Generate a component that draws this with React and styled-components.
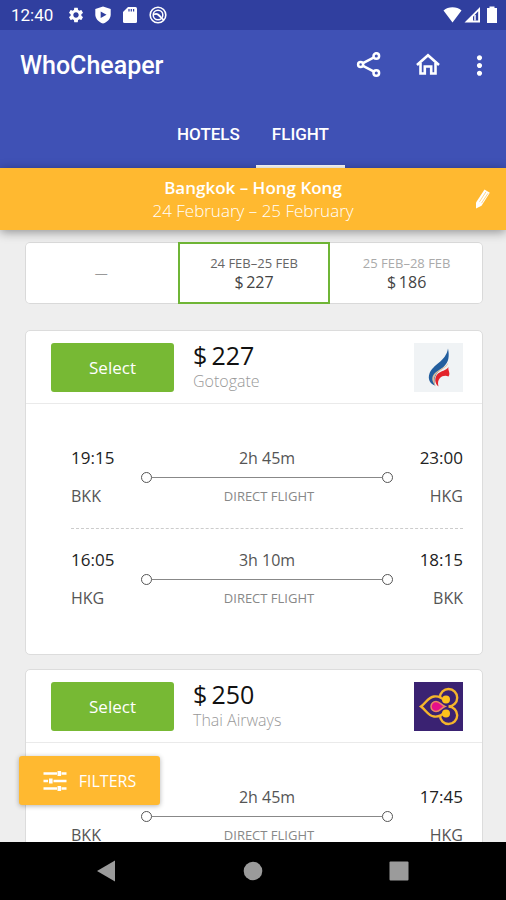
import React from "react";
import styled, { createGlobalStyle } from "styled-components";
import { MdMoreVert, MdSettings } from "react-icons/md";

const days = [
  { id: "none" },
  { id: "current", label: "24 FEB–25 FEB", price: 227, active: true },
  { id: "next", label: "25 FEB–28 FEB", price: 186 },
];

const offers = [
  {
    price: 227,
    agency: "Gotogate",
    Logo: FlameLogo,
    legs: [
      { from: "BKK", to: "HKG", start: "19:15", end: "23:00", length: "2h 45m" },
      { from: "HKG", to: "BKK", start: "16:05", end: "18:15", length: "3h 10m" },
    ],
  },
  {
    price: 250,
    agency: "Thai Airways",
    Logo: OrchidLogo,
    legs: [
      { from: "BKK", to: "HKG", start: "14:00", end: "17:45", length: "2h 45m" },
    ],
  },
];

// thin space between the sign and the amount
const formatPrice = (amount) => `$\u2009${amount}`;

function App() {
  return (
    <Screen>
      <GlobalStyle />
      <StatusBar />
      <Header />
      <TripBar>
        <div>
          <Route>Bangkok – Hong Kong</Route>
          <Dates>24 February – 25 February</Dates>
        </div>
        <EditButton aria-label="Edit search">
          <PencilIcon />
        </EditButton>
      </TripBar>
      <Results>
        <DayStrip>
          {days.map((day) => (
            <Day key={day.id} $active={day.active}>
              {day.label && <DayLabel>{day.label}</DayLabel>}
              <DayPrice $empty={!day.price}>
                {day.price ? formatPrice(day.price) : "—"}
              </DayPrice>
            </Day>
          ))}
        </DayStrip>
        {offers.map((offer) => (
          <Offer key={offer.agency} {...offer} />
        ))}
      </Results>
      <BottomArea>
        <FiltersButton>
          <FiltersIcon />
          FILTERS
        </FiltersButton>
        <SystemNav>
          <NavButton aria-label="Back">
            <svg width="20" height="22" viewBox="0 0 20 22">
              <path d="M0 11 18 .5v21z" fill="#9b9b9b" />
            </svg>
          </NavButton>
          <NavButton aria-label="Home">
            <svg width="20" height="20" viewBox="0 0 20 20">
              <circle cx="10" cy="10" r="9.3" fill="#9b9b9b" />
            </svg>
          </NavButton>
          <NavButton aria-label="Recent apps">
            <svg width="20" height="20" viewBox="0 0 20 20">
              <rect x=".5" y=".5" width="19" height="19" rx="1" fill="#9b9b9b" />
            </svg>
          </NavButton>
        </SystemNav>
      </BottomArea>
    </Screen>
  );
}

export default App;

function StatusBar() {
  return (
    <Status>
      <Clock>12:40</Clock>
      <StatusIcons $gap={9}>
        <MdSettings size={18} />
        <svg width="18" height="18" viewBox="0 0 18 18">
          <path d="M9 .6 16.700 3v5.500c0 4-3 7.400-7.700 9.100-4.700-1.700-7.700-5.100-7.700-9.100V3z" fill="#fff" />
          <path d="M6.700 5.500v6.600L12.500 8.800z" fill="#303f9f" />
        </svg>
        <svg width="18" height="18" viewBox="0 0 18 18">
          <path d="M7 1h7.500A1.500 1.500 0 0 1 16 2.500v13a1.500 1.500 0 0 1-1.500 1.500h-11A1.500 1.500 0 0 1 2 15.500V6z" fill="#fff" />
          <path d="M8 3v2.500M10.300 3v2.500M12.600 3v2.500" stroke="#303f9f" strokeWidth="1.200" />
        </svg>
        <svg width="20" height="18" viewBox="0 0 18 18" fill="none" stroke="#fff">
          <circle cx="9" cy="9" r="7.800" strokeWidth="1.600" />
          <circle cx="9" cy="9" r="4.800" strokeWidth="1.500" />
          <path d="M5 8.500c3-1.500 4.500 0 7.500 3.500" strokeWidth="1.800" />
          <path d="M12.500 12.200 14.800 14" strokeWidth="1.600" />
        </svg>
      </StatusIcons>
      <Spacer />
      <StatusIcons $gap={2}>
        <svg width="19" height="18" viewBox="0 0 19 18">
          <path d="M.5 4.500C3 2.300 6 1.300 9.500 1.300s6.500 1 9 3.200L9.500 16.500z" fill="#fff" />
        </svg>
        <svg width="17" height="18" viewBox="0 0 17 18">
          <path d="M16 1v15.500H.5zM14.200 5.300 9 10.800v3.700h5.200z" fill="#fff" fillRule="evenodd" />
          <path d="M11 9v5.500" stroke="#fff" strokeWidth="1.500" />
        </svg>
        <svg width="18" height="18" viewBox="0 0 18 18">
          <path d="M6.500 .5h5V2h2.500v15H4V2h2.500z" fill="#fff" />
        </svg>
      </StatusIcons>
    </Status>
  );
}

function Header() {
  return (
    <AppBar>
      <TitleRow>
        <Title>WhoCheaper</Title>
        <IconButton aria-label="Share">
          <svg width="26" height="26" viewBox="0 0 26 26" fill="none" stroke="#fff" strokeWidth="2.500">
            <circle cx="4.600" cy="12.500" r="2.500" />
            <circle cx="20.300" cy="4" r="2.800" />
            <circle cx="20.300" cy="21" r="2.800" />
            <path d="M7 11.200 18 5.300M7 13.800 18 19.700" />
          </svg>
        </IconButton>
        <IconButton aria-label="Home">
          <svg width="26" height="26" viewBox="0 0 26 26" fill="none" stroke="#fff" strokeWidth="2.600">
            <path d="M2 13 13 3.200 24 13" />
            <path d="M5.500 11v10.500h4.300v-7h6.400v7h4.300V11" />
          </svg>
        </IconButton>
        <MenuButton aria-label="More options">
          <MdMoreVert size={31} />
        </MenuButton>
      </TitleRow>
      <Tabs>
        <Tab href="#hotels">HOTELS</Tab>
        <Tab href="#flight" $active>
          FLIGHT
        </Tab>
      </Tabs>
    </AppBar>
  );
}

function Offer({ price, agency, Logo, legs }) {
  return (
    <Card>
      <CardHeader>
        <SelectButton>Select</SelectButton>
        <PriceBlock>
          <Price>{formatPrice(price)}</Price>
          <Agency>{agency}</Agency>
        </PriceBlock>
        <Logo />
      </CardHeader>
      <Legs>
        {legs.map((leg) => (
          <Leg key={leg.start}>
            <Stop>
              <Time>{leg.start}</Time>
              <Code>{leg.from}</Code>
            </Stop>
            <Path>
              <Duration>{leg.length}</Duration>
              <Track>
                <Dot />
                <Line />
                <Dot />
              </Track>
              <Note>DIRECT FLIGHT</Note>
            </Path>
            <Stop $end>
              <Time>{leg.end}</Time>
              <Code>{leg.to}</Code>
            </Stop>
          </Leg>
        ))}
      </Legs>
    </Card>
  );
}

function PencilIcon() {
  return (
    <svg width="18" height="22" viewBox="0 0 18 22">
      <path d="M2 14.500 10.500 1.500 15.800 4.800 7.500 17.800 2 20.500z" fill="#fff" />
      <path d="M5.500 13.800 12 3.800M7.500 15.200 14 5.300" stroke="#ffb930" strokeWidth=".6" />
    </svg>
  );
}

function FiltersIcon() {
  return (
    <svg width="24" height="22" viewBox="0 0 24 22" stroke="#fff" strokeWidth="2.400">
      <path d="M.5 3.500h13.500M18.500 3.500h5M.5 11h4.500M10.500 11h13M.5 18.500h13.500M18.500 18.500h5" />
      <path d="M16.300 1v5M7.800 8.500v5M16.300 16v5" strokeWidth="3.600" />
    </svg>
  );
}

function FlameLogo() {
  return (
    <svg width="49" height="49" viewBox="0 0 49 49">
      <path d="M0 0h49v49H0z" fill="#f0f3f5" />
      <path d="M34 5.500C35.500 13 35 19 29.500 24c-6 5-10.500 9-8.500 18.500-5-1.500-7.500-6.500-5.500-12C18.500 21.500 32 18.500 34 5.500z" fill="#235e9e" />
      <path d="M34.500 19.500c-1 6-12.500 8-14 15-.5 3 0 6 1.500 9-4.500-5-5-9.500-1-13.500 4-4 10-5 13.500-10.500z" fill="#d9bd9c" />
      <path d="M34.500 24c-1 3.500 2.500 6 0 9.500-3-1.500-6.500-.5-8.500 1.500-2 2-2.500 5-1.500 8.500-4-3-4.500-9-.5-13 3-2.500 8-3 10.500-6.500z" fill="#e3242b" />
    </svg>
  );
}

function OrchidLogo() {
  return (
    <svg width="49" height="49" viewBox="0 0 49 49" fill="none">
      <path d="M0 0h49v49H0z" fill="#3a2272" />
      <g stroke="#f4b52c" strokeWidth="2.400">
        <path d="M31 19.500C28 15.500 24 14 20 14.500c-6 .7-8 6.500-13 10 5 3.500 7 9.300 13 10 4 .5 8-1 11-5" />
        <path d="M26 15.500c0-5 4-8.500 8.500-8.500 5 0 8.700 4 8.700 8.700 0 5-4 8.800-8.700 8.800 4.700 0 8.700 3.800 8.700 8.800 0 4.700-3.700 8.700-8.700 8.700-4.500 0-8.500-3.500-8.500-8.500" />
      </g>
      <circle cx="32" cy="17.500" r="4" fill="#fdc21c" />
      <circle cx="32" cy="31.500" r="4" fill="#fdc21c" />
      <path d="M31 24.500c-4 1.500-5 5-9 5a5 5 0 0 1 0-10c4 0 5 3.500 9 5z" fill="#e5108a" stroke="#e88a62" strokeWidth="1.500" />
    </svg>
  );
}

const GlobalStyle = createGlobalStyle`
  * {
    box-sizing: border-box;
  }
  body {
    margin: 0;
    background: #eee;
    font-family: "Open Sans", "Noto Sans", sans-serif;
  }
  button {
    padding: 0;
    border: 0;
    background: none;
    color: inherit;
    font: inherit;
    cursor: pointer;
  }
  svg {
    display: block;
    flex-shrink: 0;
  }
`;

const Screen = styled.div`
  display: flex;
  flex-direction: column;
  height: 100vh;
  overflow: hidden;
`;

const Status = styled.div`
  display: flex;
  align-items: center;
  flex-shrink: 0;
  height: 30px;
  padding: 0 5px 0 11px;
  background: #303f9f;
  color: #fff;
`;
const Clock = styled.span`
  margin-right: 14px;
  font: 400 17px Roboto, sans-serif;
`;
const StatusIcons = styled.div`
  display: flex;
  align-items: center;
  gap: ${({ $gap }) => $gap}px;
`;
const Spacer = styled.div`
  flex: 1;
`;

const AppBar = styled.header`
  flex-shrink: 0;
  background: #3f51b5;
  color: #fff;
  font-family: Roboto, sans-serif;
`;
const TitleRow = styled.div`
  display: flex;
  align-items: center;
  height: 70px;
  padding: 0 11px 0 20px;
`;
const Title = styled.h1`
  flex: 1;
  margin: 0;
  font-size: 25px;
  font-weight: 500;
`;
const IconButton = styled.button`
  margin-right: 33px;
`;
const MenuButton = styled.button`
  margin-left: -10px;
`;
const Tabs = styled.nav`
  display: flex;
  justify-content: center;
`;
const Tab = styled.a`
  height: 68px;
  padding: 0 16px;
  border-bottom: 3px solid ${({ $active }) => ($active ? "#fff" : "transparent")};
  color: #fff;
  font-size: 17px;
  font-weight: 500;
  line-height: 68px;
  text-decoration: none;
`;

const TripBar = styled.section`
  position: relative;
  z-index: 1;
  display: flex;
  align-items: center;
  justify-content: center;
  flex-shrink: 0;
  height: 62px;
  background: #ffb930;
  box-shadow: 0 2px 10px rgba(0, 0, 0, 0.4);
  color: #fff;
  font-size: 17px;
  line-height: 23px;
  text-align: center;
`;
const Route = styled.div`
  font-weight: 600;
`;
const Dates = styled.div`
  font-weight: 300;
`;
const EditButton = styled.button`
  position: absolute;
  top: 20px;
  right: 14px;
`;

const Results = styled.main`
  flex: 1;
  min-height: 0;
  padding: 12px 23px 0 25px;
  overflow: hidden;
`;
const DayStrip = styled.div`
  display: flex;
  margin-bottom: 26px;
  border-radius: 5px;
  background: #fff;
  box-shadow: inset 0 0 0 1px #d9d9d9;
`;
const Day = styled.button`
  display: flex;
  flex: 1;
  flex-direction: column;
  align-items: center;
  justify-content: center;
  height: 62px;
  border: 2px solid ${({ $active }) => ($active ? "#6fb536" : "transparent")};
  color: ${({ $active }) => ($active ? "#666" : "#aaa")};
`;
const DayLabel = styled.span`
  font-size: 13px;
  line-height: 18px;
`;
const DayPrice = styled.span`
  color: ${({ $empty }) => ($empty ? "#999" : "#444")};
  font-size: ${({ $empty }) => ($empty ? 13 : 16)}px;
  line-height: 20px;
`;

const Card = styled.article`
  margin-bottom: 14px;
  border: 1px solid #dcdcdc;
  border-radius: 5px;
  background: #fff;
`;
const CardHeader = styled.div`
  display: flex;
  align-items: center;
  height: 73px;
  padding: 0 19px 0 25px;
  border-bottom: 1px solid #eaeaea;
`;
const SelectButton = styled.button`
  width: 123px;
  height: 49px;
  margin-right: 19px;
  border-radius: 3px;
  background: #77b934;
  color: #fff;
  font-size: 17px;
`;
const PriceBlock = styled.div`
  flex: 1;
`;
const Price = styled.div`
  color: #111;
  font-size: 25px;
  line-height: 28px;
`;
const Agency = styled.div`
  color: #999;
  font-size: 16px;
  font-weight: 300;
  line-height: 24px;
`;

const Legs = styled.div`
  padding: 42px 19px 44px 45px;
`;
const Leg = styled.div`
  display: flex;

  & + & {
    margin-top: 20px;
    padding-top: 19px;
    border-top: 1px dashed #ccc;
  }
`;
const Stop = styled.div`
  display: flex;
  flex-direction: column;
  gap: 14px;
  width: 70px;
  line-height: 24px;
  text-align: ${({ $end }) => ($end ? "right" : "left")};
`;
const Time = styled.span`
  color: #222;
  font-size: 17px;
  font-weight: 500;
`;
const Code = styled.span`
  color: #555;
  font-size: 16px;
`;
const Path = styled.div`
  flex: 1;
  line-height: 24px;
  text-align: center;
`;
const Duration = styled.div`
  color: #555;
  font-size: 16px;
`;
const Track = styled.div`
  display: flex;
  align-items: center;
  height: 14px;
`;
const Dot = styled.span`
  width: 11px;
  height: 11px;
  border: 1px solid #555;
  border-radius: 50%;
`;
const Line = styled.span`
  flex: 1;
  height: 1px;
  background: #888;
`;
const Note = styled.div`
  padding-left: 4px;
  color: #888;
  font-size: 13px;
`;

const BottomArea = styled.footer`
  position: relative;
  z-index: 1;
  flex-shrink: 0;
`;
const FiltersButton = styled.button`
  position: absolute;
  bottom: calc(100% + 37px);
  left: 19px;
  display: flex;
  align-items: center;
  justify-content: center;
  gap: 12px;
  width: 141px;
  height: 49px;
  border-radius: 3px;
  background: #ffb930;
  box-shadow: 0 1px 5px rgba(0, 0, 0, 0.3);
  color: #fff;
  font-size: 16px;
`;
const SystemNav = styled.nav`
  display: flex;
  justify-content: center;
  gap: 46px;
  height: 58px;
  background: #000;
`;
const NavButton = styled.button`
  display: flex;
  align-items: center;
  justify-content: center;
  width: 100px;
`;
